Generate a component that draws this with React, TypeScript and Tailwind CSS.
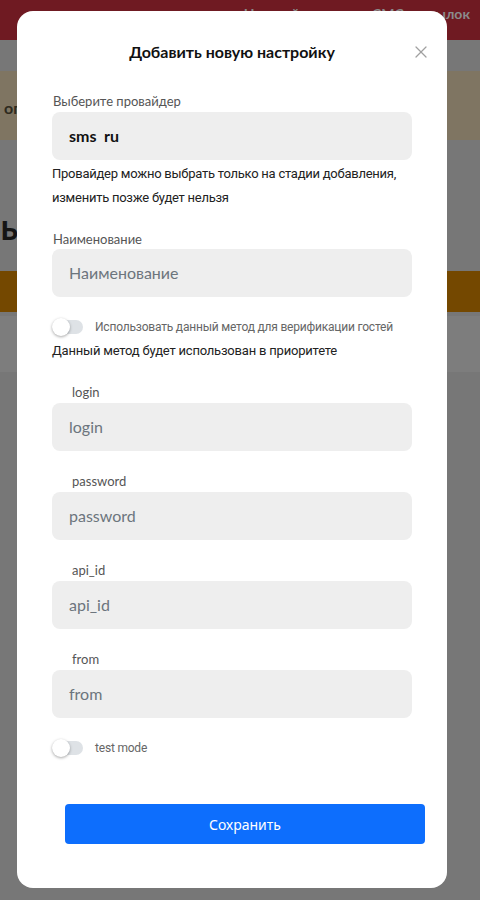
import { X } from "lucide-react";

const font = { fontFamily: "Lato, 'Noto Sans', sans-serif" };
const bodyFont = { fontFamily: "Roboto, 'Noto Sans', sans-serif" };

function Toggle({ label }: { label: string }) {
    return (
        <div className="flex items-center h-[20px]">
            <div className="relative w-[31px] h-[14px] rounded-full bg-[#dee2e6] shrink-0">
                <div className="absolute left-0 top-[-2px] w-[18px] h-[18px] rounded-full bg-white shadow-[0_1px_3px_rgba(0,0,0,0.35)]" />
            </div>
            <span className="ml-[12px] text-[12px] leading-[16px] tracking-[-0.2px] text-[#666] whitespace-nowrap" style={bodyFont}>
                {label}
            </span>
        </div>
    );
}

function Field({ name, first }: { name: string; first?: boolean }) {
    return (
        <div className={first ? "mt-[21px]" : "mt-[22px]"}>
            <div className="pl-[20px] text-[13px] leading-[16px] text-[#555]">{name}</div>
            <div className="mt-[3px] h-[48px] rounded-[8px] bg-[#eeeeee] flex items-center px-[17px] text-[16px] text-[#6c757d]">
                {name}
            </div>
        </div>
    );
}

export default function App() {
    return (
        <div className="relative w-[480px] h-[900px] overflow-hidden bg-[#777777]" style={font}>
            {/* page behind the overlay */}
            <div className="flex flex-col">
                <div className="h-[40px] bg-[#6f1a22] flex items-start justify-end pr-[10px] pt-[3px]">
                    <span className="text-[14px] font-bold text-[#8b8b8b] whitespace-nowrap">Настройка сервиса СМС рассылок</span>
                </div>
                <div className="h-[31px]" />
                <div className="h-[69px] bg-[#7f7562] flex items-center pl-[4px] pt-[4px]">
                    <span className="text-[16px] font-bold text-[#2e2a1e]">оповещения</span>
                </div>
                <div className="h-[131px] flex items-center pt-[40px] overflow-hidden">
                    <span className="-ml-[22px] text-[36px] font-bold text-[#151515] whitespace-nowrap">Был</span>
                </div>
                <div className="h-[41px] bg-[#744800]" />
                <div className="h-[4px]" />
                <div className="h-[56px] bg-[#7d7d7d]" />
            </div>

            {/* modal */}
            <div className="absolute left-[17px] top-[11px] w-[430px] bg-white rounded-[16px] px-[35px] pt-[29px] pb-[44px]">
                <div className="relative h-[24px] flex items-center justify-center">
                    <span className="text-[16px] font-bold text-[#111]">Добавить новую настройку</span>
                    <X className="absolute right-[-19px] top-[2px] w-[20px] h-[20px] text-[#a0a0a0]" strokeWidth={1.5} />
                </div>

                <div className="mt-[29px] pl-[1px] text-[13px] leading-[16px] text-[#555]">Выберите провайдер</div>
                <div className="mt-[3px] h-[48px] rounded-[8px] bg-[#eeeeee] flex items-center px-[17px]">
                    <span className="text-[16px] font-bold text-[#111] h-[14px] overflow-hidden leading-[14px]">sms_ru</span>
                </div>
                <p className="mt-[2px] text-[13px] leading-[24px] tracking-[-0.25px] text-[#222] whitespace-nowrap" style={bodyFont}>
                    Провайдер можно выбрать только на стадии добавления,
                    <br />
                    изменить позже будет нельзя
                </p>

                <div className="mt-[21px] pl-[1px] text-[13px] leading-[16px] text-[#555]">Наименование</div>
                <div className="mt-[2px] h-[48px] rounded-[8px] bg-[#eeeeee] flex items-center px-[17px] text-[16px] text-[#6c757d]">
                    Наименование
                </div>

                <div className="mt-[20px]">
                    <Toggle label="Использовать данный метод для верификации гостей" />
                </div>
                <p className="mt-[2px] text-[13px] leading-[24px] tracking-[-0.2px] text-[#222] whitespace-nowrap" style={bodyFont}>
                    Данный метод будет использован в приоритете
                </p>

                <Field name="login" first />
                <Field name="password" />
                <Field name="api_id" />
                <Field name="from" />

                <div className="mt-[20px]">
                    <Toggle label="test mode" />
                </div>

                <div className="mt-[46px] ml-[13px] w-[360px]">
                    <button
                        className="w-full h-[40px] rounded-[4px] bg-[#0d6efd] text-white text-[14px]"
                        style={{ fontFamily: "'Noto Sans', sans-serif" }}
                    >
                        Сохранить
                    </button>
                </div>
            </div>
        </div>
    );
}
